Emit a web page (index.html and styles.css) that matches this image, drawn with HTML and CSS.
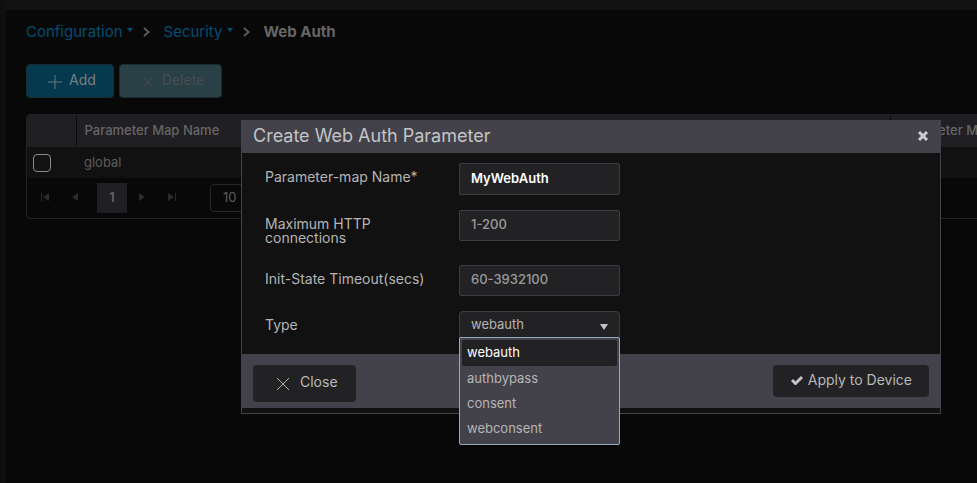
FILE: index.html
```html
<!DOCTYPE html>
<html lang="en">
<head>
<meta charset="utf-8">
<title>Web Auth</title>
<link rel="stylesheet" href="styles.css">
</head>
<body>
<main class="page">
  <nav class="crumbs" aria-label="Breadcrumb">
    <a class="crumb" href="#">Configuration<svg class="caret" viewBox="0 0 6 4"><path d="M0 0h6L3 4z"/></svg></a>
    <svg class="chevron" viewBox="0 0 7 10"><path d="M1 1l4.500 4L1 9"/></svg>
    <a class="crumb" href="#">Security<svg class="caret" viewBox="0 0 6 4"><path d="M0 0h6L3 4z"/></svg></a>
    <svg class="chevron" viewBox="0 0 7 10"><path d="M1 1l4.500 4L1 9"/></svg>
    <span class="current">Web Auth</span>
  </nav>
  <div class="toolbar">
    <button class="tool add" type="button"><svg class="icon" viewBox="0 0 14 14"><path d="M7 0v14M0 7h14"/></svg>Add</button>
    <button class="tool delete" type="button" disabled><svg class="icon" viewBox="0 0 14 14"><path d="M2 2l10 10M12 2L2 12"/></svg>Delete</button>
  </div>
  <section class="grid">
    <table class="maps">
      <colgroup><col class="col-check"><col class="col-name"><col class="col-type"></colgroup>
      <thead><tr><th></th><th>Parameter Map Name</th><th>Parameter Map</th></tr></thead>
      <tbody><tr><td class="pick"><input class="tick" type="checkbox" aria-label="Select global"></td><td>global</td><td></td></tr></tbody>
    </table>
    <div class="pager">
      <button class="nav" type="button" aria-label="First page"><svg viewBox="0 0 10 8"><path d="M1 0h1v8H1zM9 0v8L3 4z"/></svg></button>
      <button class="nav" type="button" aria-label="Previous page"><svg viewBox="0 0 10 8"><path d="M8 0v8L2 4z"/></svg></button>
      <button class="nav active" type="button">1</button>
      <button class="nav" type="button" aria-label="Next page"><svg viewBox="0 0 10 8"><path d="M2 0v8l6-4z"/></svg></button>
      <button class="nav" type="button" aria-label="Last page"><svg viewBox="0 0 10 8"><path d="M8 0h1v8H8zM1 0v8l6-4z"/></svg></button>
      <select class="size" aria-label="Items per page"><option>10</option></select>
    </div>
  </section>
</main>

<div class="overlay">
  <form class="dialog" role="dialog" aria-labelledby="title">
    <header class="head">
      <h1 class="title" id="title">Create Web Auth Parameter</h1>
      <button class="dismiss" type="button" aria-label="Dismiss"><svg viewBox="0 0 10 10"><path d="M1 1l8 8M9 1L1 9"/></svg></button>
    </header>
    <div class="fields">
      <div class="row"><label class="label" for="name">Parameter-map Name*</label><input class="control name" id="name" type="text" value="MyWebAuth"></div>
      <div class="row"><label class="label" for="http">Maximum HTTP connections</label><input class="control" id="http" type="text" placeholder="1-200"></div>
      <div class="row"><label class="label" for="timeout">Init-State Timeout(secs)</label><input class="control" id="timeout" type="text" placeholder="60-3932100"></div>
      <div class="row">
        <label class="label" for="type">Type</label>
        <div class="dropdown">
          <select class="control select" id="type"><option>webauth</option><option>authbypass</option><option>consent</option><option>webconsent</option></select>
          <svg class="arrow" viewBox="0 0 8 6"><path d="M0 0h8L4 6z"/></svg>
          <ul class="menu" role="listbox" aria-label="Type">
            <li class="option selected" role="option" aria-selected="true">webauth</li>
            <li class="option" role="option">authbypass</li>
            <li class="option" role="option">consent</li>
            <li class="option" role="option">webconsent</li>
          </ul>
        </div>
      </div>
    </div>
    <footer class="foot">
      <button class="action close" type="button"><svg class="cross" viewBox="0 0 14 14"><path d="M1 1l12 12M13 1L1 13"/></svg>Close</button>
      <button class="action apply" type="submit"><svg class="check" viewBox="0 0 12 10"><path d="M1 5l3.500 3.500L11 2"/></svg>Apply to Device</button>
    </footer>
  </form>
</div>
</body>
</html>
```
FILE: styles.css
```css
* { box-sizing: border-box; }
body {
  margin: 0;
  min-height: 100vh;
  overflow: hidden;
  background: #080808;
  border-top: 10px solid #111;
  border-left: 6px solid #0f0f11;
  color: #666;
  font: 13px/16px Inter, "Liberation Sans", sans-serif;
}
button, input, select { margin: 0; font: inherit; color: inherit; }
button { border: 0; padding: 0; background: none; }
svg { display: block; flex: none; }

.page { padding: 12px 0 0 20px; }
.crumbs { display: flex; align-items: center; height: 20px; font-size: 15px; line-height: 20px; }
.crumb { display: flex; color: #034e72; text-decoration: none; }
.caret { width: 6px; height: 4px; margin: 6px 0 0 4px; fill: #034e72; }
.chevron { width: 7px; height: 10px; margin: 0 14px 0 10px; fill: none; stroke: #5a5a5a; stroke-width: 2; }
.current { color: #666; font-weight: 700; }

.toolbar { display: flex; gap: 5px; margin-top: 22px; }
.tool {
  display: flex;
  align-items: center;
  gap: 7px;
  height: 34px;
  padding: 0 17px 2px 21px;
  border: 1px solid #1c2b30;
  border-radius: 4px;
  font-size: 14px;
  line-height: 20px;
}
.icon { width: 14px; height: 14px; margin-top: 3px; fill: none; stroke: #6a7a80; stroke-width: 1; }
.add { background: #04394f; color: #7b8083; }
.delete { background: #294047; color: #484d50; }
.delete .icon { stroke: #4c4a4c; }

.grid { width: 120%; margin-top: 16px; border: 1px solid #212126; border-radius: 4px; overflow: hidden; }
.maps { width: 100%; table-layout: fixed; border-collapse: collapse; }
.col-check { width: 49px; }
.col-name { width: 814px; }
.maps th {
  height: 32px;
  padding: 0 8px 2px;
  background: #1f1f24;
  border-right: 1px solid #0b0b0d;
  color: #666;
  font-weight: 500;
  text-align: left;
}
.maps td { height: 31px; padding: 0 8px 2px; background: #111; color: #5c5c5c; }
.maps .pick { padding: 0 6px; }
.tick {
  display: block;
  appearance: none;
  width: 18px;
  height: 18px;
  border: 1px solid #8a8a8a;
  border-radius: 4px;
  background: #131313;
}
.pager { display: flex; align-items: center; height: 40px; padding-left: 3px; }
.nav { display: flex; align-items: center; justify-content: center; width: 30px; height: 30px; padding-bottom: 3px; }
.nav svg { width: 10px; height: 8px; fill: #2c2c2e; }
.nav.active { margin: 0 0 0 7px; background: #1f1f24; color: #666; font-weight: 600; }
.size {
  appearance: none;
  width: 70px;
  height: 28px;
  margin-left: 23px;
  padding: 0 12px 2px;
  border: 1px solid #26262b;
  border-radius: 4px;
  background: #080808;
  color: #5c5c5c;
}

.overlay { position: fixed; inset: 0; padding: 120px 36px 0 241px; }
.dialog { max-width: 700px; padding-bottom: 5px; border: 1px solid #43424b; border-top: 0; background: #111; }
.head { display: flex; align-items: center; justify-content: space-between; height: 33px; padding: 0 12px 2px 11px; background: #43424b; }
.title { margin: 0; color: #c4c4c6; font-size: 18px; font-weight: 400; line-height: 24px; }
.dismiss svg { width: 10px; height: 10px; fill: none; stroke: #ccc; stroke-width: 3; }
.fields { display: grid; gap: 15px; padding: 10px 23px 12px; }
.row { display: grid; grid-template-columns: 161px 161px; align-items: start; column-gap: 33px; }
.label { padding: 7px 0 5px; color: #b5b5b5; font-size: 14px; line-height: 14px; }
.label[for="timeout"], .label[for="type"] { padding-bottom: 0; }
.control {
  display: block;
  width: 100%;
  height: 31px;
  padding: 0 11px 3px;
  border: 1px solid #3d3c45;
  border-radius: 2px;
  outline: 0;
  background: #222224;
  color: #b5b5b5;
  font-weight: 500;
}
.control::placeholder { color: #9a9a9a; opacity: 1; }
.name { height: 32px; color: #fff; font-weight: 600; }
.dropdown { position: relative; }
.select { appearance: none; padding-bottom: 5px; border-radius: 4px; font-weight: 400; }
.arrow { position: absolute; top: 13px; right: 12px; width: 8px; height: 6px; fill: #c4c4c6; }
.menu {
  position: absolute;
  top: 26px;
  left: 0;
  right: 0;
  margin: 0;
  padding: 2px 2px 3px;
  border: 1px solid #8cafbf;
  border-radius: 2px;
  background: #43424b;
  color: #b5b5b5;
  list-style: none;
}
.option { height: 25px; padding: 0 5px; line-height: 25px; }
.selected { height: 26px; border-radius: 2px; background: #222224; color: #fff; }

.foot { display: flex; align-items: flex-start; justify-content: space-between; height: 54px; padding: 11px; background: #43424b; }
.action { display: flex; align-items: center; border-radius: 4px; background: #222224; color: #b8b8b8; font-size: 14px; line-height: 20px; }
.close { height: 37px; gap: 10px; padding: 0 18px 3px 23px; }
.cross { width: 14px; height: 14px; margin-top: 3px; fill: none; stroke: #b5aaa4; stroke-width: 1; }
.apply { height: 32px; gap: 5px; padding: 0 17px 2px 18px; }
.check { width: 12px; height: 10px; fill: none; stroke: #c4c4c6; stroke-width: 3; }
```
